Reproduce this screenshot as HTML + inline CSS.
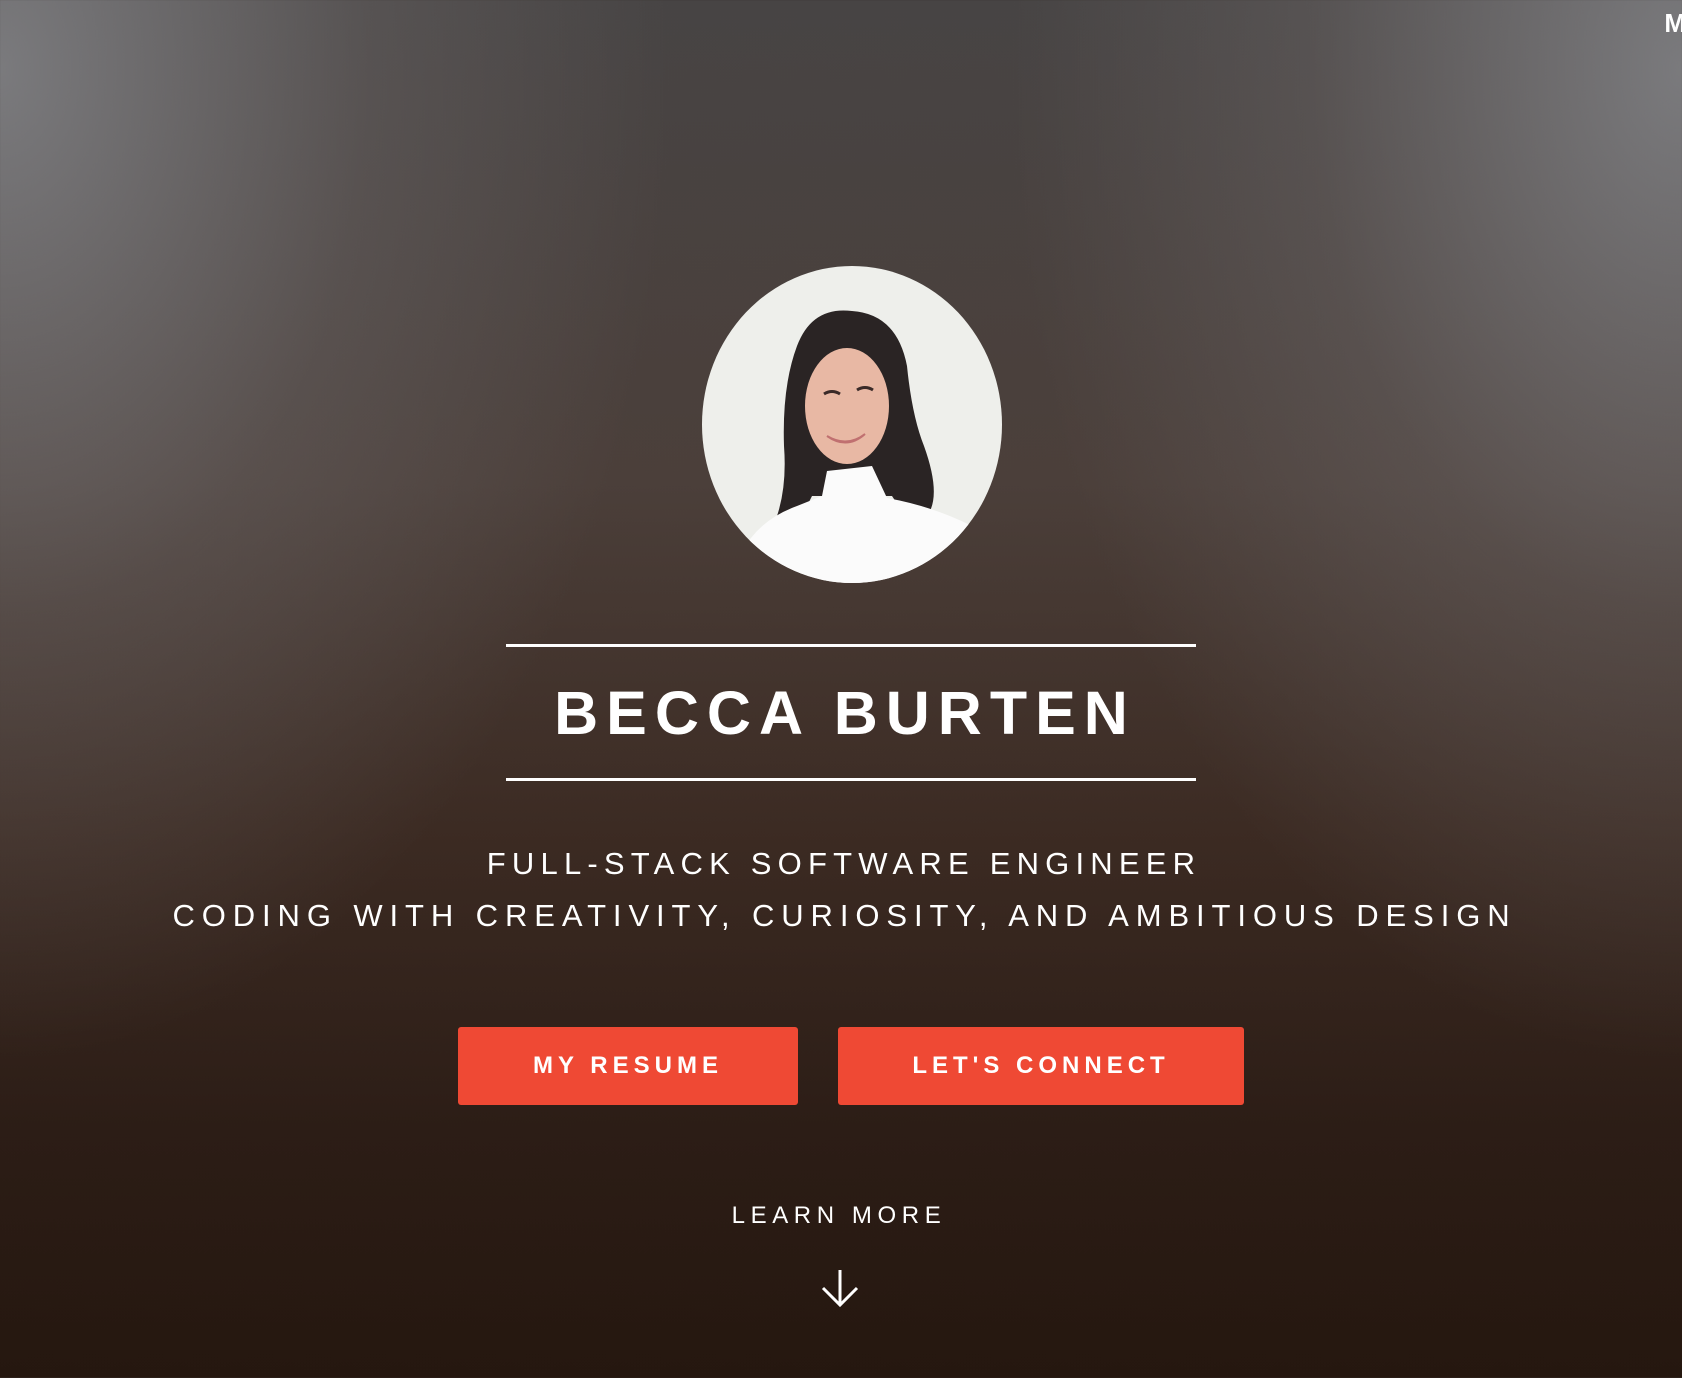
<!DOCTYPE html>
<html><head><meta charset="utf-8"><style>
html,body{margin:0;padding:0}
body{width:1682px;height:1378px;overflow:hidden;position:relative;font-family:"Liberation Sans",sans-serif;color:#fff;
background:
radial-gradient(ellipse 40% 72% at 0% 5%,rgba(125,125,128,0.95),rgba(110,105,105,0.4) 55%,rgba(90,85,85,0) 100%),
radial-gradient(ellipse 40% 72% at 100% 5%,rgba(125,125,128,0.95),rgba(110,105,105,0.4) 55%,rgba(90,85,85,0) 100%),
linear-gradient(#474444 0%,#4b3f3a 35%,#3c2b23 60%,#2c1d16 82%,#25170f 100%);}
.abs{position:absolute}
.line{position:absolute;left:506px;width:690px;height:3px;background:#fff}
.c{position:absolute;left:0;width:1682px;text-align:center;white-space:nowrap}
.btn{position:absolute;top:1027px;height:78px;background:#ef4934;border-radius:3px;display:flex;align-items:center;justify-content:center;font-weight:bold;font-size:24px;letter-spacing:5px}
</style></head><body>
<div class="abs" style="right:-4px;top:8px;font-size:26px;font-weight:bold">M</div>
<svg class="abs" style="left:702px;top:266px" width="300" height="317" viewBox="0 0 300 317">
<defs><clipPath id="cp"><ellipse cx="150" cy="158.5" rx="150" ry="158.5"/></clipPath></defs>
<g clip-path="url(#cp)">
<rect width="300" height="317" fill="#eeefeb"/>
<path d="M95 80 Q110 40 150 45 Q195 48 205 100 Q210 150 222 180 Q240 230 225 250 L200 245 L190 230 L110 230 L95 260 L75 250 Q85 220 82 180 Q80 120 95 80Z" fill="#2a2424"/>
<ellipse cx="145" cy="140" rx="42" ry="58" fill="#e8b8a4"/>
<path d="M122 128 q8-5 16 0 M155 124 q8-5 16 0" stroke="#3a2a28" stroke-width="3" fill="none"/>
<path d="M125 170 q20 12 38 -2 q-18 16 -38 2Z" fill="#fff" stroke="#c07070" stroke-width="2"/>
<path d="M125 205 L170 200 L185 232 Q230 240 270 260 L300 317 L30 317 Q40 260 95 240 L120 230Z" fill="#fbfbfb"/>
</g></svg>
<div class="line" style="top:644px"></div>
<div class="c" style="top:680px;font-size:61px;font-weight:bold;letter-spacing:8px;text-indent:8px;line-height:66px">BECCA BURTEN</div>
<div class="line" style="top:778px"></div>
<div class="c" style="top:846px;font-size:31px;letter-spacing:6.2px;text-indent:6px;line-height:36px">FULL-STACK SOFTWARE ENGINEER</div>
<div class="c" style="top:898px;font-size:31px;letter-spacing:6.9px;text-indent:7px;line-height:36px">CODING WITH CREATIVITY, CURIOSITY, AND AMBITIOUS DESIGN</div>
<div class="btn" style="left:458px;width:340px">MY RESUME</div>
<div class="btn" style="left:838px;width:406px">LET'S CONNECT</div>
<div class="c" style="top:1201px;left:-2px;font-size:24px;letter-spacing:5.6px;line-height:30px">LEARN MORE</div>
<svg class="abs" style="left:820px;top:1268px" width="40" height="40" viewBox="0 0 40 40"><path d="M20 2V37M3 20L20 37L37 20" stroke="#fff" stroke-width="3" fill="none"/></svg>
</body></html>
